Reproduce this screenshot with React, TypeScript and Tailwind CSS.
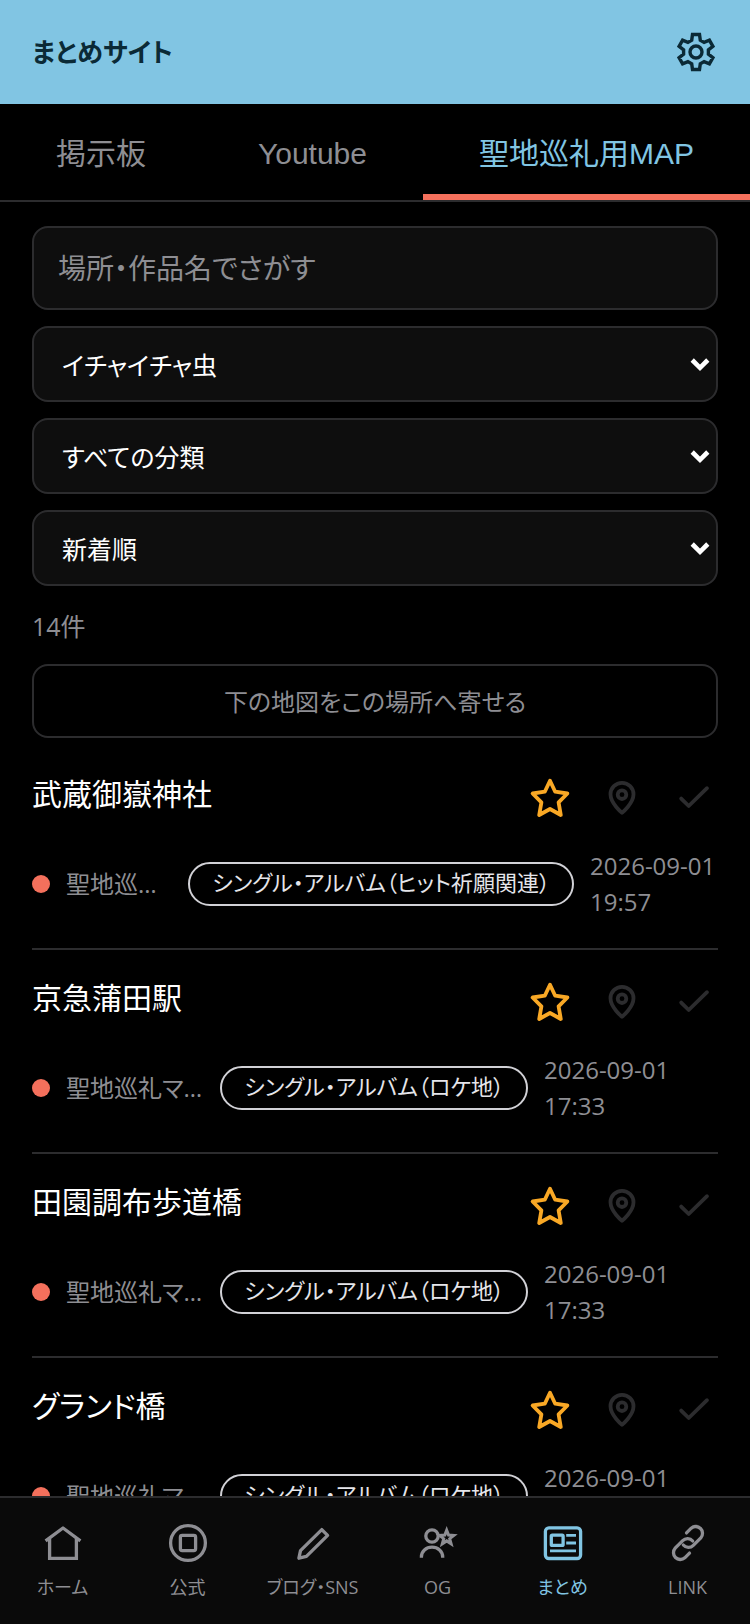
import React, { useState } from 'react';
import clsx from 'clsx';

type Spot = {
  id: number;
  name: string;
  source: string;
  tag: string;
  date: string;
  time: string;
  narrow?: boolean;
};

const tabs = ['掲示板', 'Youtube', '聖地巡礼用MAP'];

const filters = [
  { id: 'song', label: '作品', options: ['イチャイチャ虫'] },
  { id: 'category', label: '分類', options: ['すべての分類'] },
  { id: 'order', label: '並び順', options: ['新着順'] },
];

const spots: Spot[] = [
  { id: 1, name: '武蔵御嶽神社', source: '聖地巡礼マップ', tag: 'シングル・アルバム（ヒット祈願関連）', date: '2026-09-01', time: '19:57', narrow: true },
  { id: 2, name: '京急蒲田駅', source: '聖地巡礼マップ', tag: 'シングル・アルバム（ロケ地）', date: '2026-09-01', time: '17:33' },
  { id: 3, name: '田園調布歩道橋', source: '聖地巡礼マップ', tag: 'シングル・アルバム（ロケ地）', date: '2026-09-01', time: '17:33' },
  { id: 4, name: 'グランド橋', source: '聖地巡礼マップ', tag: 'シングル・アルバム（ロケ地）', date: '2026-09-01', time: '17:33' },
];

function GearIcon() {
  return (
    <svg viewBox="-20 -20 40 40" className="size-10" fill="none" stroke="currentColor" strokeWidth="3.4">
      <path d="M-4.3-11.8-3.5-17.5H3.5L4.3-11.8 8.1-9.6 13.4-11.8 16.9-5.7 12.4-2.2V2.2L16.9 5.7 13.4 11.8 8.1 9.6 4.3 11.8 3.5 17.5H-3.5L-4.3 11.8-8.1 9.6-13.4 11.8-16.9 5.7-12.4 2.2V-2.2L-16.9-5.7-13.4-11.8-8.1-9.6Z" />
      <circle r="6" />
    </svg>
  );
}

function StarIcon() {
  return (
    <svg viewBox="0 0 48 48" className="size-12" fill="none" stroke="currentColor" strokeWidth="3.8" strokeLinejoin="round">
      <path d="M24 6.7 29.2 17.7 41.4 19.5 32.6 28.4 34.8 41 24 35 13.2 41 15.4 28.4 6.6 19.5 18.8 17.7Z" />
    </svg>
  );
}

function PinIcon() {
  return (
    <svg viewBox="0 0 48 48" className="size-12" fill="none" stroke="currentColor" strokeWidth="3.8" strokeLinejoin="round">
      <path d="M24 38.7C24 38.7 35.5 29.5 35.5 20.3A11.5 11.5 0 1 0 12.5 20.3C12.5 29.5 24 38.7 24 38.7Z" />
      <circle cx="24" cy="20.7" r="4.3" />
    </svg>
  );
}

function CheckIcon() {
  return (
    <svg viewBox="0 0 48 48" className="size-12" fill="none" stroke="currentColor" strokeWidth="3.8" strokeLinecap="round" strokeLinejoin="round">
      <path d="M11.2 24.6 18.7 32 37 14.2" />
    </svg>
  );
}

function NavIcon({ children }: { children: React.ReactNode }) {
  return (
    <svg viewBox="0 0 40 40" className="size-10" fill="none" stroke="currentColor" strokeWidth="3.3">
      {children}
    </svg>
  );
}

const navItems = [
  {
    label: 'ホーム',
    icon: (
      <NavIcon>
        <path d="M2.6 17.9 20 5 37.4 17.9" strokeLinejoin="round" />
        <path d="M6.6 15.5V35.4H33.4V15.5" />
      </NavIcon>
    ),
  },
  {
    label: '公式',
    icon: (
      <NavIcon>
        <circle cx="20" cy="20" r="17.4" />
        <rect x="12.4" y="12.4" width="15.2" height="15.2" rx="1.8" />
      </NavIcon>
    ),
  },
  {
    label: 'ブログ・SNS',
    icon: (
      <NavIcon>
        <path d="M5.9 35.2 7.5 27.6 28.8 6.6 34.6 12.4 13.4 33.4Z" strokeLinejoin="round" />
      </NavIcon>
    ),
  },
  {
    label: 'OG',
    icon: (
      <NavIcon>
        <circle cx="14" cy="13" r="6.2" />
        <path d="M3.4 34.8V34C3.4 28.3 8 24.2 14 24.2S24.7 28.3 24.7 34V34.8" />
        <path d="M28.7 7.2 30.6 12.1 35.8 12.4 31.7 15.7 33.1 20.8 28.7 17.9 24.3 20.8 25.7 15.7 21.6 12.4 26.8 12.1Z" strokeWidth="3" />
      </NavIcon>
    ),
  },
  {
    label: 'まとめ',
    icon: (
      <NavIcon>
        <rect x="2.4" y="4.8" width="35.2" height="30.7" rx="3.5" />
        <rect x="8.3" y="12.2" width="11.8" height="10.2" rx="1" />
        <path d="M23.2 12.3H33M23.2 20H33M7 27.8H33" strokeWidth="2.8" />
      </NavIcon>
    ),
  },
  {
    label: 'LINK',
    icon: (
      <NavIcon>
        <path d="M18.5 9.9 23.2 5.2A6.8 6.8 0 0 1 32.8 14.8L25.3 22.3A6.8 6.8 0 0 1 15.3 22" strokeLinecap="round" />
        <path d="M21.5 30.1 16.8 34.8A6.8 6.8 0 0 1 7.2 25.2L14.7 17.7A6.8 6.8 0 0 1 24.7 18" strokeLinecap="round" />
      </NavIcon>
    ),
  },
];

function SpotRow({ spot }: { spot: Spot }) {
  return (
    <li className="flex flex-col gap-[26px] border-b-2 border-[#2c2c2e] py-7">
      <div className="flex h-12 items-center gap-6">
        <h2 className="min-w-0 flex-1 truncate pb-2 text-[30px] leading-10 text-white">{spot.name}</h2>
        <button type="button" aria-label="お気に入り" className="text-[#f9a825]"><StarIcon /></button>
        <button type="button" aria-label="地図で見る" className="text-[#2c2c2e]"><PinIcon /></button>
        <button type="button" aria-label="訪問済み" className="text-[#2c2c2e]"><CheckIcon /></button>
      </div>
      <div className="flex items-center gap-4">
        <span className="size-[18px] shrink-0 rounded-full bg-[#f4705c]" />
        <span className="min-w-0 flex-1 truncate text-2xl leading-9">{spot.source}</span>
        <span className="shrink-0 rounded-full border-2 border-[#d1d1d6] px-[22px] pb-1 text-[22px] leading-9 text-[#e5e5ea]">{spot.tag}</span>
        <time className={clsx('shrink-0 text-2xl leading-9', spot.narrow ? 'w-32' : 'w-[174px]')}>
          {spot.date} {spot.time}
        </time>
      </div>
    </li>
  );
}

export default function App() {
  const [activeTab, setActiveTab] = useState('聖地巡礼用MAP');
  const [keyword, setKeyword] = useState('');

  return (
    <div className="flex h-screen flex-col bg-black font-['Open_Sans','Noto_Sans_CJK_JP',sans-serif] text-[#8e8e93] [font-feature-settings:'palt']">
      <header className="flex h-[104px] shrink-0 items-center justify-between bg-[#81c5e3] pr-[34px] pl-8 text-[#0b2a36]">
        <h1 className="text-[26px] leading-10 font-bold">まとめサイト</h1>
        <button type="button" aria-label="設定"><GearIcon /></button>
      </header>

      <div role="tablist" className="flex h-[98px] shrink-0 border-b-2 border-[#2c2c2e] font-['Liberation_Sans','Noto_Sans_CJK_JP',sans-serif]">
        {tabs.map((tab) => (
          <button
            key={tab}
            type="button"
            role="tab"
            aria-selected={tab === activeTab}
            onClick={() => setActiveTab(tab)}
            className={clsx(
              'grow border-b-6 pt-2 text-[30px]',
              tab === activeTab ? 'border-[#f4705c] text-[#81c5e3]' : 'border-transparent',
            )}
          >
            {tab}
          </button>
        ))}
      </div>

      <main className="min-h-0 flex-1 overflow-y-auto px-8 pt-6">
        <div className="flex flex-col gap-4">
          <input
            type="text"
            aria-label="場所・作品名でさがす"
            placeholder="場所・作品名でさがす"
            value={keyword}
            onChange={(e) => setKeyword(e.target.value)}
            className="h-[84px] w-full rounded-2xl border-2 border-[#2c2c2e] bg-[#0e0e0e] px-6 text-[28px] text-white placeholder:text-[#8e8e93]"
          />
          {filters.map((filter) => (
            <div key={filter.id} className="relative">
              <select
                aria-label={filter.label}
                className="h-[76px] w-full appearance-none rounded-2xl border-2 border-[#2c2c2e] bg-[#0e0e0e] px-7 pt-1 text-[25px] text-white"
              >
                {filter.options.map((option) => (
                  <option key={option}>{option}</option>
                ))}
              </select>
              <svg viewBox="0 0 18 14" className="pointer-events-none absolute top-8 right-[9px] h-3.5 w-[18px] overflow-visible" fill="none" stroke="#fff" strokeWidth="4.6">
                <path d="M1.2 2 9 9.8 16.8 2" />
              </svg>
            </div>
          ))}
        </div>

        <p className="pt-[21px] pb-[19px] text-[25px] leading-[38px]">14件</p>

        <button type="button" className="mb-2 h-[74px] w-full rounded-2xl border-2 border-[#2c2c2e] pt-0.5 text-[24px]">
          下の地図をこの場所へ寄せる
        </button>

        <ul>
          {spots.map((spot) => (
            <SpotRow key={spot.id} spot={spot} />
          ))}
        </ul>
      </main>

      <nav className="grid h-32 shrink-0 grid-cols-6 border-t-2 border-[#2c2c2e] bg-[#0a0a0a]">
        {navItems.map((item) => (
          <a
            key={item.label}
            href="#"
            className={clsx('flex flex-col items-center gap-2 pt-[25px] text-[18px] leading-8', item.label === 'まとめ' && 'text-[#81c5e3]')}
          >
            {item.icon}
            {item.label}
          </a>
        ))}
      </nav>
    </div>
  );
}
